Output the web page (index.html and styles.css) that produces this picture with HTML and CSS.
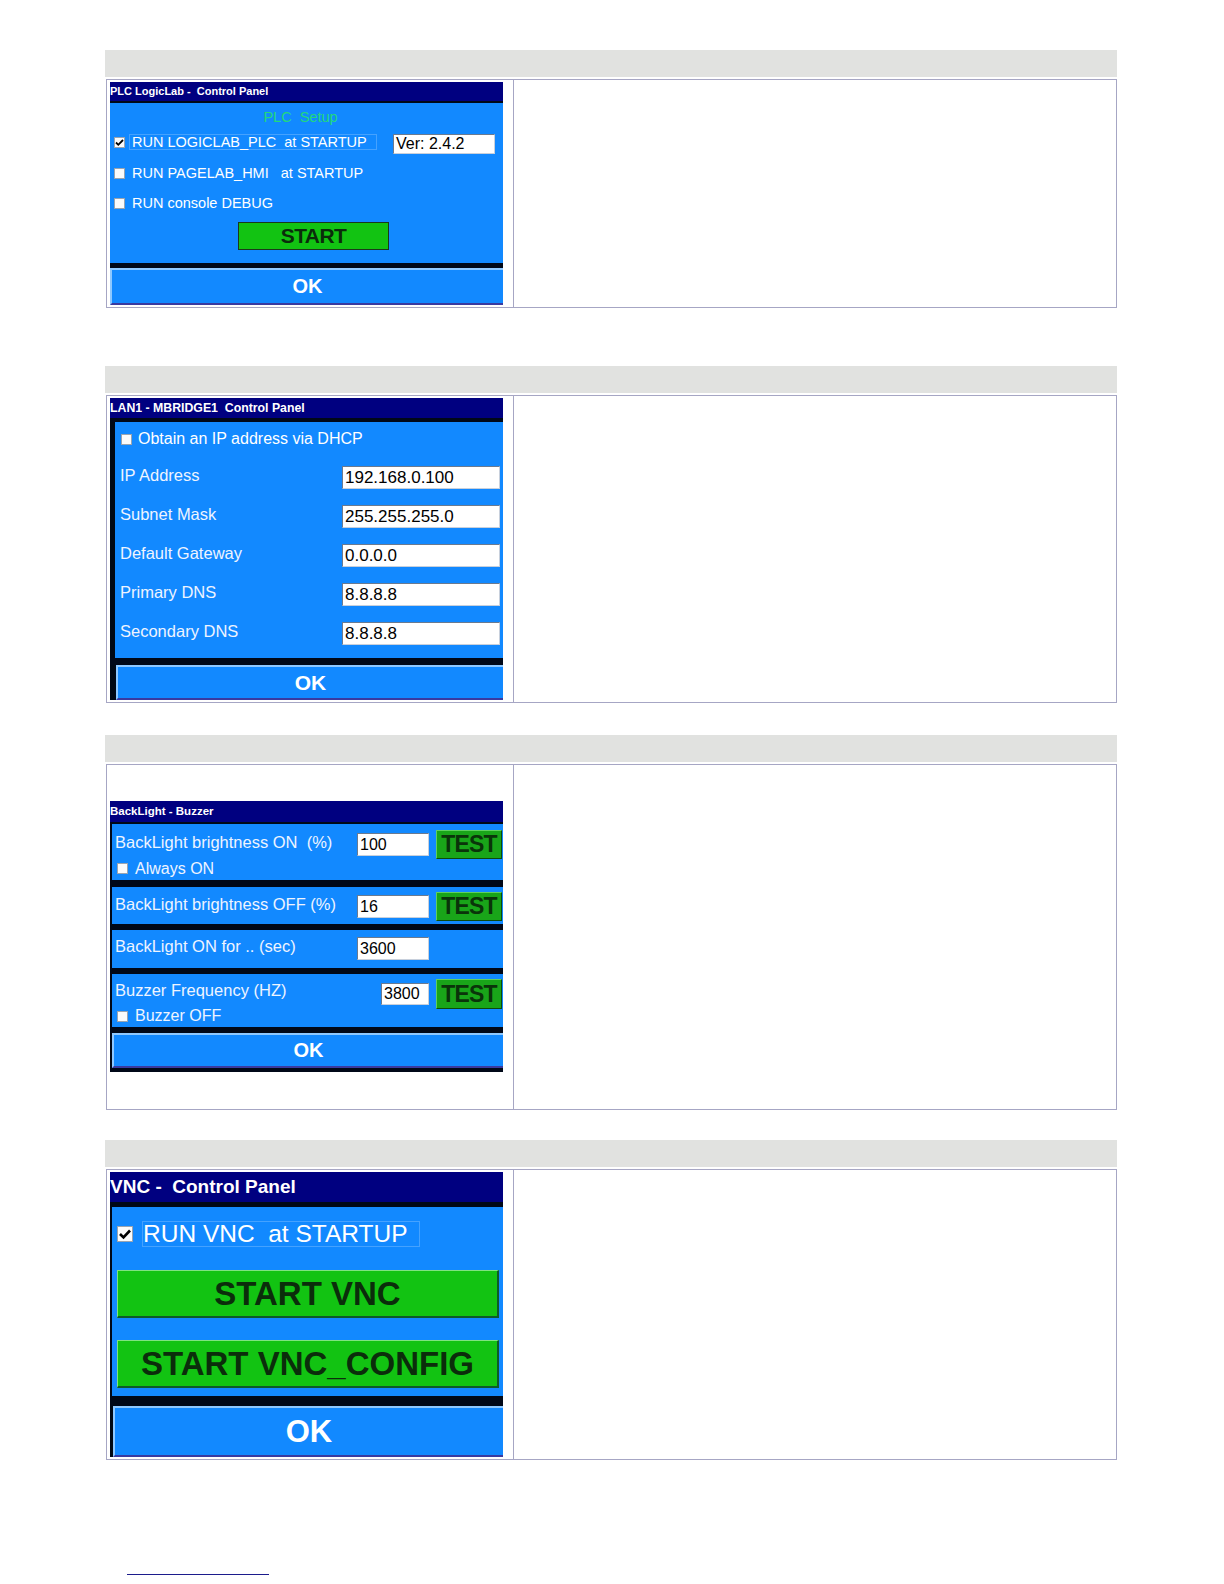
FILE: index.html
```html
<!DOCTYPE html>
<html lang="en">
<head>
<meta charset="utf-8">
<title>Control Panels</title>
<link rel="stylesheet" href="styles.css">
</head>
<body>
<div class="page">

  <section class="section s1">
    <div class="bar"></div>
    <div class="row">
      <div class="shot">
        <div class="panel p1">
          <div class="title">PLC LogicLab -  Control Panel</div>
          <div class="band b2"></div>
          <div class="body">
            <div class="setup">PLC  Setup</div>
            <div class="chk-row r1">
              <span class="cb"><svg viewBox="0 0 11 11" width="11" height="11"><path d="M2 5.5 L4.3 7.8 L9 3" fill="none" stroke="#000" stroke-width="1.8"/></svg></span>
              <span class="focus">RUN LOGICLAB_PLC  at STARTUP</span>
              <span class="field ver">Ver: 2.4.2</span>
            </div>
            <div class="chk-row r2">
              <span class="cb"></span>
              <span class="lbl">RUN PAGELAB_HMI   at STARTUP</span>
            </div>
            <div class="chk-row r3">
              <span class="cb"></span>
              <span class="lbl">RUN console DEBUG</span>
            </div>
            <div class="gbtn start">START</div>
          </div>
          <div class="band b5"></div>
          <div class="ok ok1">OK</div>
        </div>
      </div>
      <div class="desc"></div>
    </div>
  </section>

  <section class="section s2">
    <div class="bar"></div>
    <div class="row">
      <div class="shot">
        <div class="panel p2">
          <div class="title">LAN1 - MBRIDGE1  Control Panel</div>
          <div class="band b4"></div>
          <div class="framed">
            <div class="body">
              <div class="dhcp">
                <span class="cb"></span>
                <span class="lbl">Obtain an IP address via DHCP</span>
              </div>
              <div class="ip-row"><span class="lbl">IP Address</span><span class="field">192.168.0.100</span></div>
              <div class="ip-row"><span class="lbl">Subnet Mask</span><span class="field">255.255.255.0</span></div>
              <div class="ip-row"><span class="lbl">Default Gateway</span><span class="field">0.0.0.0</span></div>
              <div class="ip-row"><span class="lbl">Primary DNS</span><span class="field">8.8.8.8</span></div>
              <div class="ip-row"><span class="lbl">Secondary DNS</span><span class="field">8.8.8.8</span></div>
            </div>
          </div>
          <div class="band b7"></div>
          <div class="framed okframe"><div class="ok ok2">OK</div></div>
        </div>
      </div>
      <div class="desc"></div>
    </div>
  </section>

  <section class="section s3">
    <div class="bar"></div>
    <div class="row">
      <div class="shot shot-tall">
        <div class="panel p3">
          <div class="title">BackLight - Buzzer</div>
          <div class="band b2"></div>
          <div class="groups">
            <div class="grp g1">
              <div class="grow">
                <span class="lbl">BackLight brightness ON  (%)</span>
                <span class="field f72">100</span>
                <span class="test">TEST</span>
              </div>
              <div class="sub"><span class="cb"></span><span class="lbl">Always ON</span></div>
            </div>
            <div class="band b7"></div>
            <div class="grp g2">
              <div class="grow">
                <span class="lbl">BackLight brightness OFF (%)</span>
                <span class="field f72">16</span>
                <span class="test">TEST</span>
              </div>
            </div>
            <div class="band b6"></div>
            <div class="grp g3">
              <div class="grow">
                <span class="lbl">BackLight ON for .. (sec)</span>
                <span class="field f72">3600</span>
                <span class="spacer"></span>
              </div>
            </div>
            <div class="band b6"></div>
            <div class="grp g4">
              <div class="grow">
                <span class="lbl up">Buzzer Frequency (HZ)</span>
                <span class="field f48">3800</span>
                <span class="test">TEST</span>
              </div>
              <div class="sub sub2"><span class="cb"></span><span class="lbl">Buzzer OFF</span></div>
            </div>
            <div class="band b6"></div>
            <div class="ok ok3">OK</div>
            <div class="band b4"></div>
          </div>
        </div>
      </div>
      <div class="desc"></div>
    </div>
  </section>

  <section class="section s4">
    <div class="bar"></div>
    <div class="row">
      <div class="shot">
        <div class="panel p4">
          <div class="title">VNC -  Control Panel</div>
          <div class="band b5"></div>
          <div class="vbody">
            <div class="vchk">
              <span class="cb cb16"><svg viewBox="0 0 16 16" width="16" height="16"><path d="M3 8 L6.5 11.5 L13 4.5" fill="none" stroke="#000" stroke-width="2.6"/></svg></span>
              <span class="focus vfocus">RUN VNC  at STARTUP</span>
            </div>
            <div class="gbtn big">START VNC</div>
            <div class="gbtn big cfg">START VNC_CONFIG</div>
          </div>
          <div class="band b10"></div>
          <div class="framed okframe4"><div class="ok ok4">OK</div></div>
        </div>
      </div>
      <div class="desc"></div>
    </div>
  </section>

  <div class="footrule"></div>
</div>
</body>
</html>
```

FILE: styles.css
```css
* { box-sizing: border-box; }

body {
  margin: 0;
  background: #ffffff;
  font-family: "Liberation Sans", Arial, sans-serif;
  color: #ffffff;
}

.page {
  padding: 50px 0 0 106px;
  width: 1117px;
  height: 1584px;
}

.section { width: 1011px; }
.s1 { margin-bottom: 58px; }
.s2 { margin-bottom: 32px; }
.s3 { margin-bottom: 30px; }

.bar {
  height: 27px;
  background: #e1e2e0;
  margin-bottom: 2px;
  margin-left: -1px;
}

.row {
  display: grid;
  grid-template-columns: 407px 1fr;
  border: 1px solid #a6a6c4;
}

.shot {
  border-right: 1px solid #a6a6c4;
  padding: 2px 0 2px 3px;
}

.shot-tall { padding: 36px 0 37px 3px; }

.desc { background: #ffffff; }

/* ---------- panel common ---------- */
.panel {
  width: 393px;
  display: flex;
  flex-direction: column;
  background: #000814;
}

.title, .lbl, .focus, .setup, .gbtn, .test, .ok, .field {
  white-space: pre;
}

.title {
  background: #000080;
  color: #ffffff;
  font-weight: bold;
  overflow: hidden;
}

.band { background: #000818; flex: none; }
.b2 { height: 2px; }
.b4 { height: 4px; }
.b5 { height: 5px; }
.b6 { height: 6px; }
.b7 { height: 7px; }
.b10 { height: 10px; }

.body { background: #1289ff; }

.cb {
  display: inline-flex;
  width: 11px;
  height: 11px;
  background: #fbfbfb;
  border: 1px solid #9aa4b0;
  flex: none;
  align-items: center;
  justify-content: center;
  overflow: hidden;
}
.cb svg { display: block; flex: none; }

.field {
  background: #ffffff;
  color: #000000;
  border: 1px solid #6a7a90;
  border-right-color: #c8d0dc;
  border-bottom-color: #c8d0dc;
  flex: none;
  display: flex;
  align-items: center;
  padding-left: 2px;
}

.focus {
  border: 1px solid rgba(200, 225, 255, 0.28);
}

.gbtn {
  background: #12c312;
  color: #0b2d0b;
  font-weight: bold;
  display: flex;
  align-items: center;
  justify-content: center;
  border: 1px solid #0d4a0d;
  border-top-color: #6fdc6f;
  border-left-color: #6fdc6f;
}

.ok {
  background: #1289ff;
  color: #ffffff;
  font-weight: bold;
  display: flex;
  align-items: center;
  justify-content: center;
  border-top: 2px solid #8ec8ff;
  border-left: 2px solid #8ec8ff;
  border-bottom: 2px solid #3a3aa0;
  flex: none;
}

/* ---------- panel 1 ---------- */
.p1 { height: 223px; }
.p1 .title { height: 19px; font-size: 11px; line-height: 19px; }
.p1 .body {
  height: 160px;
  display: flex;
  flex-direction: column;
  padding-top: 6px;
}
.setup {
  height: 16px;
  line-height: 16px;
  font-size: 14.5px;
  color: #22d87c;
  text-align: center;
  padding-right: 12px;
}
.chk-row {
  display: flex;
  align-items: center;
  height: 22px;
  font-size: 14.5px;
}
.chk-row .cb { margin-left: 4px; }
.r1 { margin-top: 6px; }
.r2 { margin-top: 9px; }
.r3 { margin-top: 8px; }
.r1 .focus {
  margin-left: 4px;
  width: 248px;
  height: 16px;
  line-height: 14px;
  padding-left: 2px;
}
.chk-row .lbl { margin-left: 7px; }
.ver {
  margin-left: 16px;
  width: 102px;
  height: 20px;
  font-size: 16px;
  align-self: flex-end;
  margin-bottom: -1px;
}
.start {
  margin-top: 8px;
  margin-left: 128px;
  width: 151px;
  height: 28px;
  font-size: 21px;
  letter-spacing: -0.6px;
  border-color: #1a3a1a;
}
.ok1 { height: 37px; font-size: 20px; }

/* ---------- panel 2 ---------- */
.p2 { height: 302px; }
.p2 .title { height: 20px; font-size: 12.3px; line-height: 20px; flex: none; }
.framed {
  display: flex;
  padding-left: 5px;
  background: #000814;
  flex: none;
}
.p2 .body {
  flex: 1;
  height: 236px;
  padding-top: 6px;
}
.dhcp {
  display: flex;
  align-items: center;
  height: 22px;
  font-size: 16px;
}
.dhcp .cb { margin-left: 6px; }
.dhcp .lbl { margin-left: 6px; }
.ip-row {
  display: flex;
  align-items: center;
  height: 23px;
  margin-top: 16px;
}
.ip-row .lbl {
  flex: 1;
  padding-left: 5px;
  font-size: 16.5px;
  color: #eef4ff;
  padding-bottom: 4px;
}
.ip-row .field {
  width: 158px;
  height: 23px;
  margin-right: 3px;
  font-size: 17px;
}
.okframe { padding-left: 6px; }
.ok2 { flex: 1; height: 35px; font-size: 21px; }

/* ---------- panel 3 ---------- */
.p3 { height: 271px; }
.p3 .title {
  height: 21px;
  font-size: 11.5px;
  line-height: 21px;
  flex: none;
}
.groups {
  display: flex;
  flex-direction: column;
  border-left: 2px solid #000818;
}
.grp { background: #1289ff; flex: none; }
.g1 { height: 56px; padding-top: 6px; }
.g2 { height: 37px; padding-top: 5px; }
.g3 { height: 38px; padding-top: 4px; }
.g4 { height: 53px; padding-top: 5px; }
.grow {
  display: grid;
  grid-template-columns: 1fr 72px 66px;
  column-gap: 7px;
  align-items: center;
  height: 29px;
  padding-right: 1px;
}
.grow .lbl {
  padding-left: 3px;
  font-size: 16.5px;
  color: #eef4ff;
  padding-bottom: 4px;
}
.grow .lbl.up { padding-bottom: 8px; }
.f72 { width: 72px; height: 23px; font-size: 16px; }
.f48 { width: 48px; height: 22px; font-size: 16px; justify-self: end; }
.test {
  height: 29px;
  background: #19a519;
  color: #0a340a;
  font-weight: bold;
  font-size: 23px;
  letter-spacing: -0.8px;
  display: flex;
  align-items: center;
  justify-content: center;
  border: 1px solid #0c4a0c;
  border-top-color: #5fcf5f;
  border-left-color: #5fcf5f;
}
.g4 .test { height: 30px; }
.sub {
  display: flex;
  align-items: center;
  height: 19px;
  font-size: 16px;
}
.sub .cb { margin-left: 5px; }
.sub .lbl { margin-left: 7px; color: #eef4ff; }
.sub2 { height: 16px; }
.ok3 { height: 35px; font-size: 20px; }

/* ---------- panel 4 ---------- */
.p4 { height: 285px; }
.p4 .title { height: 30px; font-size: 19px; line-height: 30px; flex: none; }
.vbody {
  height: 189px;
  background: #1289ff;
  border-left: 2px solid #000818;
  padding-top: 14px;
  display: flex;
  flex-direction: column;
  flex: none;
}
.vchk {
  display: flex;
  align-items: center;
  height: 26px;
}
.cb16 { width: 16px; height: 16px; margin-left: 5px; }
.vfocus {
  margin-left: 9px;
  width: 278px;
  height: 26px;
  font-size: 24.5px;
  line-height: 24px;
  padding-left: 0;
}
.big {
  margin-left: 5px;
  width: 382px;
  height: 48px;
  font-size: 33px;
  margin-top: 23px;
  border-top-color: #7fe37f;
  border-left-color: #7fe37f;
  border-bottom: 2px solid #0d5a2a;
  border-right: 2px solid #0d5a2a;
  flex: none;
}
.cfg { margin-top: 22px; }
.okframe4 { padding-left: 3px; }
.ok4 { flex: 1; height: 51px; font-size: 31px; }

/* ---------- footnote rule ---------- */
.footrule {
  margin-top: 114px;
  margin-left: 21px;
  width: 142px;
  height: 1px;
  background: #1c1c8c;
}
```
